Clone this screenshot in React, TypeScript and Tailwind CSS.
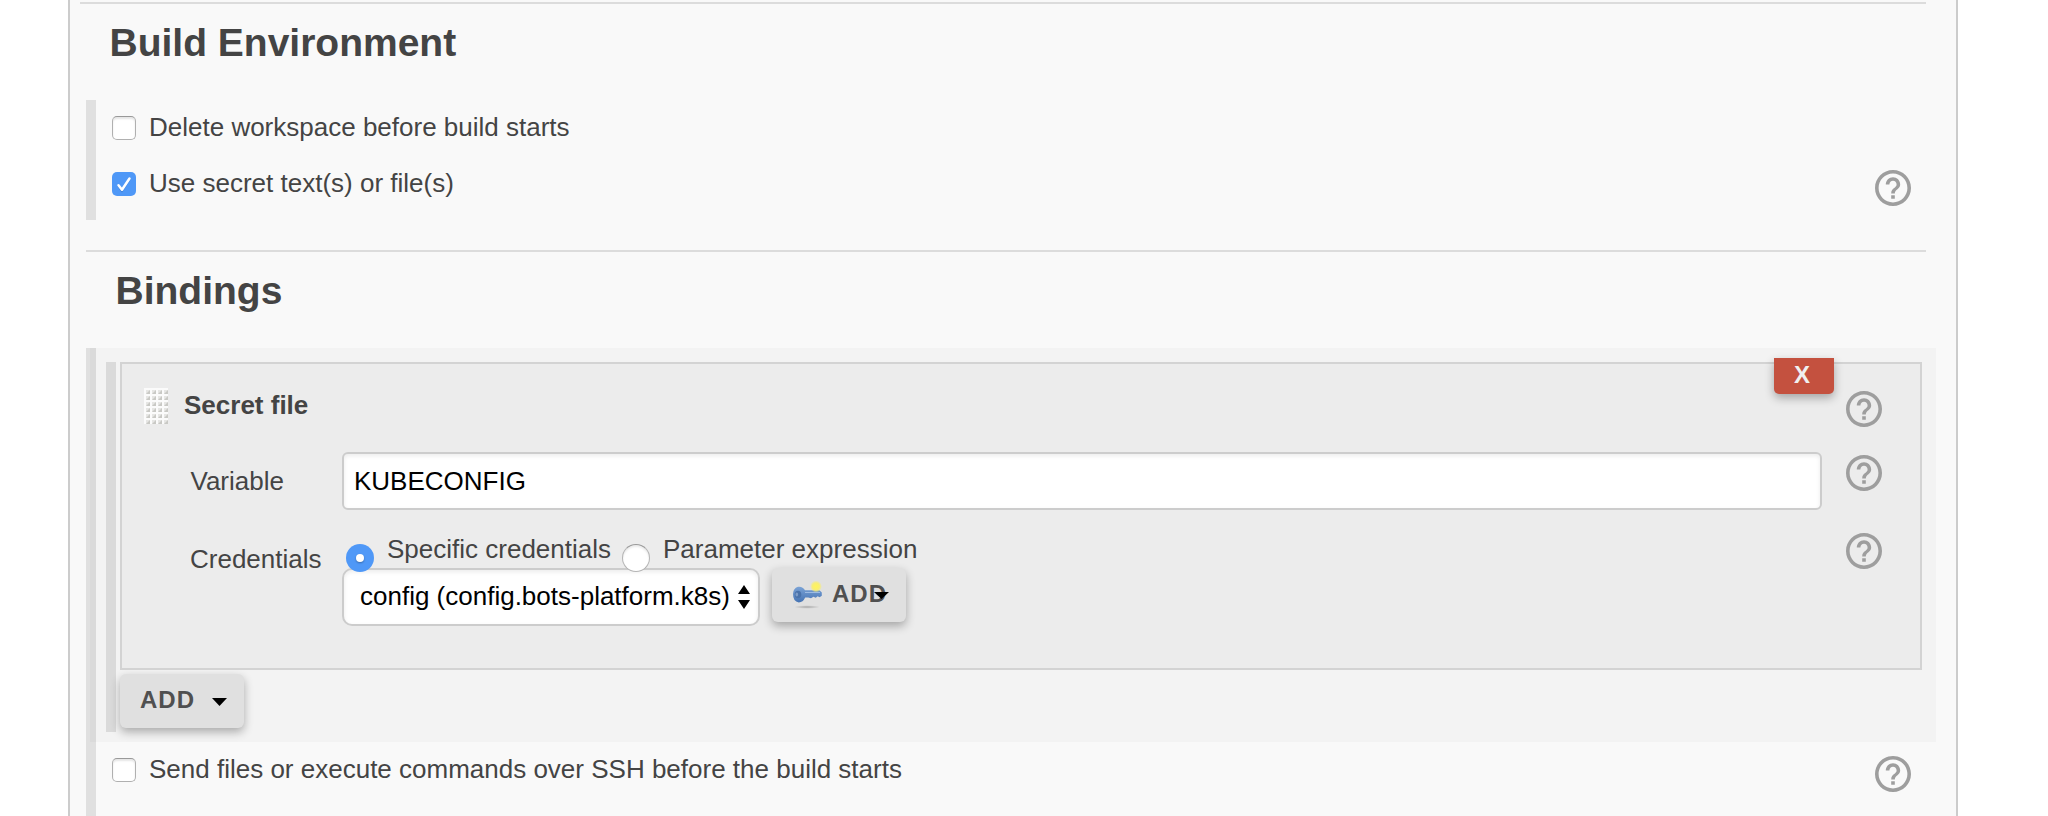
import React from "react";

function HelpIcon() {
  return (
    <svg viewBox="2 2 20 20" className="block size-9 shrink-0" fill="#9e9e9e">
      <path d="M11 18h2v-2h-2v2zm1-16C6.48 2 2 6.48 2 12s4.480 10 10 10 10-4.480 10-10S17.520 2 12 2zm0 18c-4.410 0-8-3.590-8-8s3.590-8 8-8 8 3.590 8 8-3.590 8-8 8zm0-14c-2.210 0-4 1.790-4 4h2c0-1.100.9-2 2-2s2 .9 2 2c0 2-3 1.750-3 5h2c0-2.250 3-2.500 3-5 0-2.210-1.790-4-4-4z" />
    </svg>
  );
}

function Checkbox({ checked = false }: { checked?: boolean }) {
  if (checked) {
    return (
      <span className="flex size-6 shrink-0 items-center justify-center rounded-[5px] bg-[#4f98f7]">
        <svg viewBox="0 0 24 24" className="size-6" fill="none">
          <path d="M6.500 14L10 19L17.500 7.500" stroke="#2f6fc4" strokeOpacity="0.5" strokeWidth="2.200" strokeLinecap="round" strokeLinejoin="round" />
          <path d="M6.500 13.200L10 17.800L17.500 6.500" stroke="#fff" strokeWidth="2.500" strokeLinecap="round" strokeLinejoin="round" />
        </svg>
      </span>
    );
  }
  return (
    <span className="size-6 shrink-0 rounded-[5px] border border-[#b0b0b0] border-t-[#999] bg-white shadow-[inset_0_2px_2px_rgba(0,0,0,0.1)]" />
  );
}

function Radio({ checked = false }: { checked?: boolean }) {
  return checked ? (
    <span className="relative z-10 flex size-7 shrink-0 items-center justify-center rounded-full bg-[#4f98f7]">
      <span className="size-2 rounded-full bg-white shadow-[0_1px_2px_rgba(0,0,0,0.3)]" />
    </span>
  ) : (
    <span className="relative z-10 size-7 shrink-0 rounded-full border border-[#b4b4b4] border-t-[#999] bg-white shadow-[inset_0_2px_2px_rgba(0,0,0,0.08)]" />
  );
}

function DragHandle() {
  return (
    <svg viewBox="0 0 24 36" className="h-9 w-6 shrink-0">
      <defs>
        <pattern id="dots" width="6" height="6" patternUnits="userSpaceOnUse">
          <rect width="6" height="6" fill="#fbfbfb" />
          <rect x="2" y="2" width="4" height="4" fill="#e6e6e4" />
          <path d="M6 2v4H2z" fill="#c9c9c5" />
        </pattern>
      </defs>
      <rect width="24" height="36" fill="url(#dots)" />
    </svg>
  );
}

function KeyIcon() {
  return (
    <svg viewBox="0 0 32 32" className="size-8 shrink-0">
      <defs>
        <radialGradient id="spark">
          <stop offset="0" stopColor="#fff45c" />
          <stop offset="0.600" stopColor="#f8ee74" />
          <stop offset="1" stopColor="#f8ee74" stopOpacity="0" />
        </radialGradient>
        <radialGradient id="shade">
          <stop offset="0" stopColor="#000" stopOpacity="0.250" />
          <stop offset="1" stopColor="#000" stopOpacity="0" />
        </radialGradient>
        <linearGradient id="blue" x1="0" y1="0" x2="0" y2="1">
          <stop offset="0" stopColor="#7ba3d6" />
          <stop offset="1" stopColor="#4573b3" />
        </linearGradient>
      </defs>
      <ellipse cx="15" cy="28" rx="13" ry="1.800" fill="url(#shade)" />
      <path d="M1 15q0-5.500 5-7.200 4.500-.8 7 3.400h14.500l2.300 2.400v3.200l-2.200 1.400-2-1-1.800 1.500-2.400-1-2.400 1.600-2.800-.8h-3q-2.200 4.800-6.400 5-5.800-1-5.800-8.500z" fill="url(#blue)" />
      <ellipse cx="6" cy="15.500" rx="3.300" ry="3.800" fill="#4a72aa" />
      <ellipse cx="4.800" cy="15.500" rx="1.300" ry="2" fill="#7c9cc8" />
      <path d="M13 13.500h15" stroke="#9dbbe2" strokeWidth="1" />
      <circle cx="24" cy="7.500" r="6" fill="url(#spark)" />
    </svg>
  );
}

function Caret({ className }: { className: string }) {
  return (
    <svg viewBox="0 0 14 8" preserveAspectRatio="none" className={className}>
      <path d="M0 0h14L7 8z" fill="#000" />
    </svg>
  );
}

function OptionRow({ label, checked }: { label: string; checked?: boolean }) {
  return (
    <label className="flex h-6 items-center gap-[13px]">
      <Checkbox checked={checked} />
      <span className="pb-0.5 whitespace-nowrap">{label}</span>
    </label>
  );
}

export default function App() {
  return (
    <div className="flex h-[816px] w-[2048px] overflow-hidden bg-white pl-[68px] font-['Liberation_Sans',Arial,sans-serif] text-[26px] leading-[30px] text-[#444]">
      <main className="h-[816px] w-[1890px] border-x-2 border-[#ccc] bg-[#f9f9f9] pt-[2px] pl-[10px]">
        <section className="h-[98px] w-[1846px] border-t-2 border-[#dcdcdc] pt-[17px] pl-[29.500px]">
          <h2 className="text-[39px] leading-[44px] font-bold">Build Environment</h2>
        </section>

        <div className="ml-[6px] flex h-[120px] w-[1840px] justify-between border-l-[10px] border-[#e0e0e0] pr-[15px] pl-4">
          <div className="flex flex-col gap-8 pt-4">
            <OptionRow label="Delete workspace before build starts" />
            <OptionRow label="Use secret text(s) or file(s)" checked />
          </div>
          <div className="pt-[70px]">
            <HelpIcon />
          </div>
        </div>

        <section className="mt-[30px] ml-[6px] h-[98px] w-[1840px] border-t-2 border-[#dcdcdc] pt-[17px] pl-[29.500px]">
          <h2 className="text-[39px] leading-[44px] font-bold">Bindings</h2>
        </section>

        <div className="ml-[6px] flex h-[394px] w-[1850px]">
          <div className="w-1 bg-[#e0e0e0]" />
          <div className="w-1.5 bg-[#dadada]" />
          <div className="flex flex-1 bg-[#f3f3f3] pt-3.5 pl-2.5">
            <div className="h-[370px] w-2.5 bg-[#dadada]" />
            <div className="ml-1 flex w-[1802px] flex-col items-start gap-1">
              <div className="relative h-[308px] w-full border-2 border-[#d3d3d3] bg-[#ececec] pl-[22px]">
                <button className="absolute -top-[6px] right-[86px] h-9 w-[60px] rounded-b-[5px] bg-[#c4513f] pr-1 pb-0.5 text-[24px] leading-[34px] font-bold text-[#f0f0f0] shadow-[0_4px_10px_rgba(0,0,0,0.3)]">
                  X
                </button>

                <div className="flex h-[88px] justify-between pr-[38px]">
                  <div className="flex gap-4 pt-6">
                    <DragHandle />
                    <b className="pt-0.5">Secret file</b>
                  </div>
                  <div className="pt-[27px]">
                    <HelpIcon />
                  </div>
                </div>

                <div className="flex h-[92px] items-start pr-[38px]">
                  <span className="w-[198px] shrink-0 pt-[14px] pl-[46.500px]">Variable</span>
                  <div className="flex h-[58px] w-[1480px] items-center rounded-md border-2 border-[#ccc] bg-white pb-px pl-[10px] text-black shadow-[inset_0_2px_4px_rgba(0,0,0,0.08)]">
                    KUBECONFIG
                  </div>
                  <div className="ml-auto pt-[3px]">
                    <HelpIcon />
                  </div>
                </div>

                <div className="flex h-[100px] items-start pr-[38px]">
                  <span className="w-[198px] shrink-0 pl-[46px]">Credentials</span>
                  <div className="flex flex-col">
                    <div className="flex h-6 pl-1">
                      <Radio checked />
                      <span className="-mt-2.5 ml-[13px] w-[235px] whitespace-nowrap">Specific credentials</span>
                      <Radio />
                      <span className="-mt-2.5 ml-[13px] whitespace-nowrap">Parameter expression</span>
                    </div>
                    <div className="flex gap-3">
                      <div className="flex h-[58px] w-[418px] items-center rounded-[10px] border-2 border-[#ccc] bg-white pl-4 text-black shadow-[inset_0_2px_4px_rgba(0,0,0,0.08)]">
                        <span className="pb-[3px] whitespace-nowrap">config (config.bots-platform.k8s)</span>
                        <svg viewBox="0 0 12 24" className="mr-2 ml-auto h-6 w-3">
                          <path d="M6 0l6 9H0zM6 24l6-9H0z" fill="#000" />
                        </svg>
                      </div>
                      <button className="relative flex h-[54px] w-[134px] items-center rounded-md bg-[#e0e0e0] pl-5 text-[24px] font-bold tracking-[1px] text-[#505050] shadow-[0_4px_10px_rgba(0,0,0,0.3)]">
                        <KeyIcon />
                        <span className="ml-2 pb-0.5">ADD</span>
                        <Caret className="absolute top-6 right-[17px] h-[7px] w-[15px]" />
                      </button>
                    </div>
                  </div>
                  <div className="-mt-[11px] ml-auto">
                    <HelpIcon />
                  </div>
                </div>
              </div>

              <button className="flex h-[54px] w-[124px] items-center rounded-md bg-[#e0e0e0] pl-5 text-[24px] font-bold tracking-[1px] text-[#505050] shadow-[0_4px_10px_rgba(0,0,0,0.3)]">
                <span className="pb-0.5">ADD</span>
                <Caret className="mt-0.5 mr-[17px] ml-auto h-2 w-[15px]" />
              </button>
            </div>
          </div>
        </div>

        <div className="ml-[6px] flex h-[74px] w-[1840px] justify-between border-l-[10px] border-[#e0e0e0] pt-3.5 pr-[15px] pl-4">
          <div className="pt-0.5">
            <OptionRow label="Send files or execute commands over SSH before the build starts" />
          </div>
          <HelpIcon />
        </div>
      </main>
    </div>
  );
}
